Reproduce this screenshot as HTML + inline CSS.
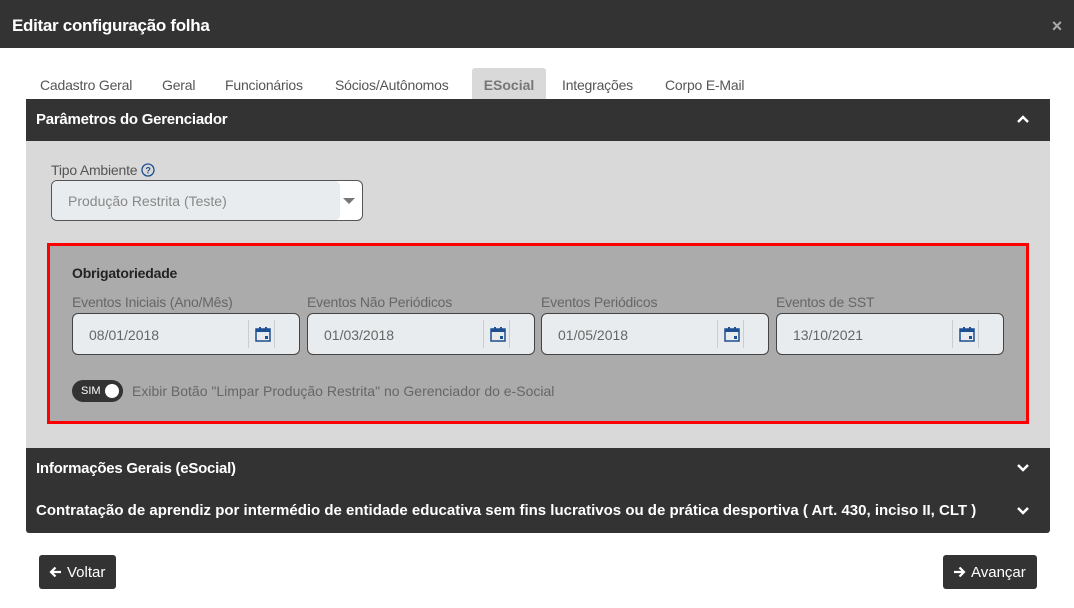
<!DOCTYPE html>
<html><head><meta charset="utf-8"><style>
*{box-sizing:border-box;margin:0;padding:0}
body{width:1074px;height:608px;background:#fff;font-family:"Liberation Sans",sans-serif;position:relative;overflow:hidden}
.top{position:absolute;left:0;top:0;width:1074px;height:48px;background:#333;color:#fff;font-weight:bold;font-size:17px;padding:16px 12px;letter-spacing:-0.3px}
.x{position:absolute;right:12px;top:16px;color:#aaa;font-size:18px;font-weight:bold}
.tab{position:absolute;top:77px;font-size:14px;color:#555;letter-spacing:-0.2px}
.tabact{position:absolute;left:472px;top:68px;width:74px;height:31px;background:#d9d9d9;border-radius:3px 3px 0 0;color:#777;font-size:14px;font-weight:bold;text-align:center;padding-top:9px}
.hd{position:absolute;left:26px;width:1024px;background:#333;color:#fff;font-weight:bold;font-size:15px;padding-left:10px;letter-spacing:-0.25px}
.body{position:absolute;left:26px;top:141px;width:1024px;height:307px;background:#d9d9d9}
.lbl{position:absolute;font-size:14px;color:#555;letter-spacing:-0.2px}
.sel{position:absolute;left:51px;top:180px;width:312px;height:41px;border:1px solid #555;border-radius:6px;background:#fff}
.sel .in{position:absolute;left:0;top:0;width:288px;height:39px;background:#e8ecef;border-radius:5px;color:#888;font-size:14px;padding:12px 16px}
.red{position:absolute;left:47px;top:243px;width:982px;height:181px;border:3px solid #f00;background:#ababab}
.inp{position:absolute;top:313px;width:228px;height:42px;border:1px solid #444;border-radius:6px;background:#e8ecef;color:#666;font-size:14px;padding:13px 16px}
.inp svg{position:absolute;right:28px;top:12px}
.inp .sep{position:absolute;right:50px;top:6px;width:1px;height:28px;background:#ccc}
.inp .sep2{position:absolute;right:24px;top:6px;width:1px;height:28px;background:#ccc}
.chev{position:absolute;right:20px}
.btn{position:absolute;top:555px;height:34px;background:#333;color:#fff;border-radius:3px;font-size:15px;padding:9px 10px;white-space:nowrap}
.btn svg{vertical-align:-1px;margin-right:5px}
</style></head><body>
<div class="top">Editar configuração folha<span class="x">×</span></div>
<span class="tab" style="left:40px">Cadastro Geral</span>
<span class="tab" style="left:162px">Geral</span>
<span class="tab" style="left:225px">Funcionários</span>
<span class="tab" style="left:335px">Sócios/Autônomos</span>
<div class="tabact">ESocial</div>
<span class="tab" style="left:562px">Integrações</span>
<span class="tab" style="left:665px">Corpo E-Mail</span>
<div class="hd" style="top:99px;height:42px;padding-top:12px">Parâmetros do Gerenciador
<svg class="chev" style="top:15px" width="14" height="10" viewBox="0 0 14 10"><path d="M2 8L7 3L12 8" stroke="#fff" stroke-width="2.5" fill="none"/></svg></div>
<div class="body"></div>
<span class="lbl" style="left:51px;top:162px">Tipo Ambiente <svg width="14" height="14" style="vertical-align:-2px"><circle cx="7" cy="7" r="6" fill="none" stroke="#1d4f91" stroke-width="1.3"/><text x="7" y="10.5" font-size="9" font-weight="bold" text-anchor="middle" fill="#1d4f91" font-family="Liberation Sans">?</text></svg></span>
<div class="sel"><div class="in">Produção Restrita (Teste)</div><svg style="position:absolute;right:7px;top:17px" width="12" height="7"><path d="M0 0H12L6 6Z" fill="#777"/></svg></div>
<div class="red"></div>
<span style="position:absolute;left:72px;top:265px;font-size:14px;font-weight:bold;color:#222;letter-spacing:-0.2px">Obrigatoriedade</span>
<span class="lbl" style="left:72px;top:294px;color:#666">Eventos Iniciais (Ano/Mês)</span>
<span class="lbl" style="left:307px;top:294px;color:#666">Eventos Não Periódicos</span>
<span class="lbl" style="left:541px;top:294px;color:#666">Eventos Periódicos</span>
<span class="lbl" style="left:776px;top:294px;color:#666">Eventos de SST</span>
<div class="inp" style="left:72px">08/01/2018<span class="sep"></span><span class="sep2"></span><svg width="16" height="16" viewBox="0 0 16 16"><rect x="1" y="3" width="14" height="12" fill="none" stroke="#1d4f91" stroke-width="1.5"/><rect x="1" y="3" width="14" height="3" fill="#1d4f91"/><rect x="4" y="1" width="2" height="3" fill="#1d4f91"/><rect x="10" y="1" width="2" height="3" fill="#1d4f91"/><rect x="10" y="10" width="3" height="3" fill="#1d4f91"/></svg></div>
<div class="inp" style="left:307px">01/03/2018<span class="sep"></span><span class="sep2"></span><svg width="16" height="16" viewBox="0 0 16 16"><rect x="1" y="3" width="14" height="12" fill="none" stroke="#1d4f91" stroke-width="1.5"/><rect x="1" y="3" width="14" height="3" fill="#1d4f91"/><rect x="4" y="1" width="2" height="3" fill="#1d4f91"/><rect x="10" y="1" width="2" height="3" fill="#1d4f91"/><rect x="10" y="10" width="3" height="3" fill="#1d4f91"/></svg></div>
<div class="inp" style="left:541px">01/05/2018<span class="sep"></span><span class="sep2"></span><svg width="16" height="16" viewBox="0 0 16 16"><rect x="1" y="3" width="14" height="12" fill="none" stroke="#1d4f91" stroke-width="1.5"/><rect x="1" y="3" width="14" height="3" fill="#1d4f91"/><rect x="4" y="1" width="2" height="3" fill="#1d4f91"/><rect x="10" y="1" width="2" height="3" fill="#1d4f91"/><rect x="10" y="10" width="3" height="3" fill="#1d4f91"/></svg></div>
<div class="inp" style="left:776px">13/10/2021<span class="sep"></span><span class="sep2"></span><svg width="16" height="16" viewBox="0 0 16 16"><rect x="1" y="3" width="14" height="12" fill="none" stroke="#1d4f91" stroke-width="1.5"/><rect x="1" y="3" width="14" height="3" fill="#1d4f91"/><rect x="4" y="1" width="2" height="3" fill="#1d4f91"/><rect x="10" y="1" width="2" height="3" fill="#1d4f91"/><rect x="10" y="10" width="3" height="3" fill="#1d4f91"/></svg></div>
<div style="position:absolute;left:72px;top:380px;width:51px;height:22px;background:#333;border-radius:11px;color:#fff;font-size:11px;padding:5px 0 0 9px">SIM<span style="position:absolute;right:4px;top:4px;width:14px;height:14px;border-radius:50%;background:#fff"></span></div>
<span class="lbl" style="left:132px;top:383px;color:#666;letter-spacing:0">Exibir Botão "Limpar Produção Restrita" no Gerenciador do e-Social</span>
<div class="hd" style="top:448px;height:40px;padding-top:12px">Informações Gerais (eSocial)
<svg class="chev" style="top:15px" width="14" height="10" viewBox="0 0 14 10"><path d="M2 2L7 7L12 2" stroke="#fff" stroke-width="2.5" fill="none"/></svg></div>
<div class="hd" style="top:488px;height:45px;padding-top:14px;border-radius:0 0 3px 3px;letter-spacing:0">Contratação de aprendiz por intermédio de entidade educativa sem fins lucrativos ou de prática desportiva ( Art. 430, inciso II, CLT )
<svg class="chev" style="top:18px" width="14" height="10" viewBox="0 0 14 10"><path d="M2 2L7 7L12 2" stroke="#fff" stroke-width="2.5" fill="none"/></svg></div>
<div class="btn" style="left:39px;width:77px"><svg width="13" height="12" viewBox="0 0 13 12"><path d="M12 6H2M6.5 1.5L2 6L6.5 10.5" stroke="#fff" stroke-width="2.2" fill="none"/></svg>Voltar</div>
<div class="btn" style="left:943px;width:94px"><svg width="13" height="12" viewBox="0 0 13 12"><path d="M1 6H11M6.5 1.5L11 6L6.5 10.5" stroke="#fff" stroke-width="2.2" fill="none"/></svg>Avançar</div>
</body></html>
